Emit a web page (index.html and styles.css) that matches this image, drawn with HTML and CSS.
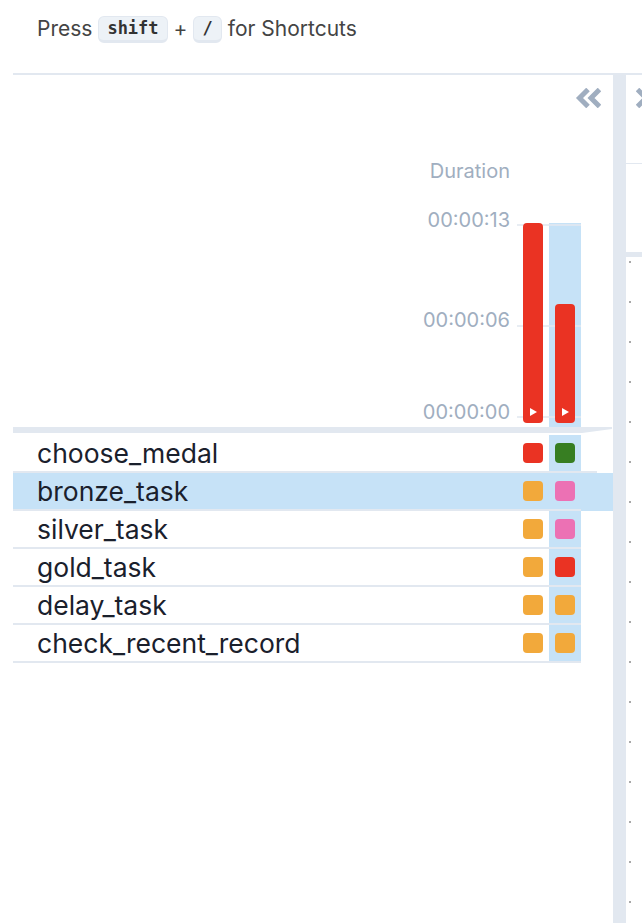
FILE: index.html
```html
<!DOCTYPE html>
<html>
<head>
<meta charset="utf-8">
<link rel="stylesheet" href="styles.css">
</head>
<body>
<div class="page">
  <header class="topbar">
    <span>Press</span>
    <kbd class="kbd">shift</kbd>
    <span>+</span>
    <kbd class="kbd">/</kbd>
    <span>for Shortcuts</span>
  </header>
  <div class="main">
    <section class="grid">
      <div class="toolbar">
        <svg class="collapse" width="26" height="20" viewBox="0 0 26 20"><path d="M13 1.5 L4.5 10 L13 18.5 M24.5 1.5 L16 10 L24.5 18.5" fill="none" stroke="#a0aec0" stroke-width="5"/></svg>
      </div>
      <div class="chart-head">
        <div class="labels">
          <div class="duration">Duration</div>
          <div class="axis a1">00:00:13</div>
          <div class="axis a2">00:00:06</div>
          <div class="axis a3">00:00:00</div>
        </div>
        <div class="bars">
          <div class="gridline g1"></div>
          <div class="gridline g2"></div>
          <div class="gridline g3"></div>
          <div class="bar-col"><div class="bar" style="height:200px"><span class="play"></span></div></div>
          <div class="bar-col sel"><div class="bar" style="height:119px"><span class="play"></span></div></div>
        </div>
      </div>
      <div class="band"></div>
      <div class="rows">
        <div class="row first"><div class="row-main"><div class="name">choose_medal</div><div class="cell"><span class="sq red"></span></div><div class="cell sel"><span class="sq green"></span></div></div></div>
        <div class="row selected"><div class="row-main"><div class="name">bronze_task</div><div class="cell"><span class="sq orange"></span></div><div class="cell sel"><span class="sq pink"></span></div></div></div>
        <div class="row"><div class="row-main"><div class="name">silver_task</div><div class="cell"><span class="sq orange"></span></div><div class="cell sel"><span class="sq pink"></span></div></div></div>
        <div class="row"><div class="row-main"><div class="name">gold_task</div><div class="cell"><span class="sq orange"></span></div><div class="cell sel"><span class="sq red"></span></div></div></div>
        <div class="row"><div class="row-main"><div class="name">delay_task</div><div class="cell"><span class="sq orange"></span></div><div class="cell sel"><span class="sq orange"></span></div></div></div>
        <div class="row"><div class="row-main"><div class="name">check_recent_record</div><div class="cell"><span class="sq orange"></span></div><div class="cell sel"><span class="sq orange"></span></div></div></div>
      </div>
    </section>
    <div class="divider"></div>
    <section class="details">
      <div class="details-top">
        <div class="details-bar">
          <svg class="expand" width="26" height="20" viewBox="0 0 26 20"><path d="M1.5 1.5 L10 10 L1.5 18.5 M13 1.5 L21.5 10 L13 18.5" fill="none" stroke="#a0aec0" stroke-width="5"/></svg>
        </div>
      </div>
      <div class="details-sep"></div>
      <div class="details-body"></div>
    </section>
  </div>
</div>
</body>
</html>
```

FILE: styles.css
```css
* { box-sizing: border-box; }
html, body { margin: 0; padding: 0; background: #fff; }
body { font-family: Inter, "Liberation Sans", Arial, sans-serif; color: #1a202c; }

.page { width: 642px; height: 924px; overflow: hidden; }

.topbar {
  margin-left: 13px;
  padding: 15px 0 0 24px;
  height: 75px;
  border-bottom: 2px solid #e2e8f0;
  display: flex;
  align-items: flex-start;
  gap: 6px;
  font-size: 21px;
  line-height: 28px;
  color: #444;
}
.kbd {
  font-family: "DejaVu Sans Mono", "Liberation Mono", monospace;
  font-weight: bold;
  font-size: 17px;
  line-height: 22px;
  height: 27px;
  margin-top: 1px;
  padding: 0 8px;
  background: #edf2f7;
  color: #333;
  border: 1px solid #e2e8f0;
  border-bottom-width: 3px;
  border-radius: 6px;
}

.main { display: flex; height: 849px; margin-left: 13px; }

.grid { width: 600px; flex: none; }
.toolbar {
  height: 40px;
  display: flex;
  justify-content: flex-end;
  padding: 13px 12px 0 0;
}
.collapse { display: block; }

.chart-head { display: flex; height: 312px; }
.labels {
  width: 497px;
  display: flex;
  flex-direction: column;
  align-items: flex-end;
  color: #a0aec0;
  font-size: 20px;
  line-height: 24px;
  padding-top: 44px;
}
.axis.a1 { margin-top: 25px; }
.axis.a2 { margin-top: 76px; }
.axis.a3 { margin-top: 68px; }

.bars {
  margin-left: 7px;
  margin-top: auto;
  height: 204px;
  width: 64px;
  display: flex;
  align-items: flex-end;
  position: relative;
}
.gridline {
  position: absolute;
  left: 0;
  right: 0;
  height: 2px;
  background: #e2e8f0;
  opacity: 0.8;
  z-index: 1;
}
.g1 { top: 1px; }
.g2 { top: 102px; }
.g3 { top: 193px; }
.bar-col {
  width: 32px;
  height: 100%;
  display: flex;
  align-items: flex-end;
  justify-content: center;
  padding-bottom: 4px;
}
.bar-col.sel { background: #c6e2f7; }
.bar {
  width: 20px;
  background: #ea3323;
  border-radius: 4px;
  position: relative;
  z-index: 2;
  display: flex;
  flex-direction: column;
  justify-content: flex-end;
  align-items: center;
  padding-bottom: 7px;
}
.play {
  display: block;
  width: 0;
  height: 0;
  margin-left: 1px;
  border-left: 7px solid #fff;
  border-top: 4.5px solid transparent;
  border-bottom: 4.5px solid transparent;
}

.band {
  height: 6px;
  width: 599px;
  margin-bottom: 2px;
  background: #e2e8f0;
  clip-path: polygon(0 0, 100% 0, 100% 2px, 569px 6px, 0 6px);
}

.rows { display: flex; flex-direction: column; }
.row { width: 600px; height: 38px; }
.row.selected { background: #c6e2f7; }
.row-main {
  width: 568px;
  height: 38px;
  display: flex;
  border-bottom: 2px solid #e2e8f0;
}
.row.first .row-main { width: 584px; }
.row.first .row-main .cell.sel { margin-right: 16px; }
.name {
  width: 504px;
  flex: none;
  padding-left: 24px;
  font-size: 26.5px;
  line-height: 36px;
  color: #1a202c;
  white-space: nowrap;
}
.cell {
  width: 32px;
  flex: none;
  display: flex;
  align-items: center;
  justify-content: center;
}
.cell.sel { background: #c6e2f7; }
.sq { width: 20px; height: 20px; border-radius: 4px; display: block; }
.red { background: #ea3323; }
.green { background: #377e22; }
.orange { background: #f2a93b; }
.pink { background: #ec71b4; }

.divider { width: 13px; flex: none; background: #e2e8f0; height: 848px; }

.details { flex: 1; display: flex; flex-direction: column; }
.details-top { height: 177px; }
.details-bar {
  height: 89px;
  border-bottom: 1px solid #e2e8f0;
  padding: 13px 0 0 10px;
}
.expand { display: block; }
.details-sep { height: 5px; background: #e2e8f0; }
.details-body {
  flex: 1;
  background-image: linear-gradient(to bottom, #a8a8a8 0, #a8a8a8 2px, transparent 2px);
  background-size: 2px 40px;
  background-repeat: repeat-y;
  background-position: 3px 4px;
}
```
